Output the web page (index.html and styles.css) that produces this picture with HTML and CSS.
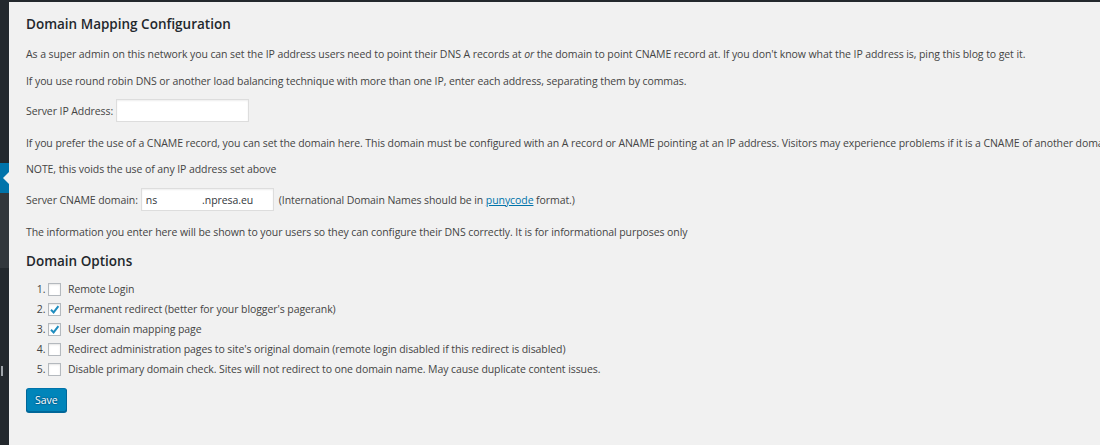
FILE: index.html
```html
<!DOCTYPE html>
<html lang="en">
<head>
    <meta charset="UTF-8">
    <title>Domain Mapping Configuration</title>
    <link rel="stylesheet" href="styles.css">
</head>
<body>
    <div class="admin-bar"></div>
    <div class="layout">
        <div class="sidebar">
            <div class="menu-top"></div>
            <div class="menu-current"><span class="menu-arrow"></span></div>
            <div class="menu-sub"></div>
            <div class="menu-rest"><span class="menu-mark"></span></div>
        </div>

        <div class="wrap">
            <h3 class="section-title">Domain Mapping Configuration</h3>
            <p class="p-first">As a super admin on this network you can set the IP address users need to point their DNS A records at <em>or</em> the domain to point CNAME record at. If you don't know what the IP address is, ping this blog to get it.</p>
            <p class="p-tight">If you use round robin DNS or another load balancing technique with more than one IP, enter each address, separating them by commas.</p>

            <div class="field-row row-ip">
                <label for="ipaddress">Server IP Address:</label>
                <input type="text" id="ipaddress" class="field-ip" value="">
            </div>

            <p class="p-cname">If you prefer the use of a CNAME record, you can set the domain here. This domain must be configured with an A record or ANAME pointing at an IP address. Visitors may experience problems if it is a CNAME of another domain.</p>
            <p class="p-note">NOTE, this voids the use of any IP address set above</p>

            <div class="field-row row-cname">
                <label for="cname">Server CNAME domain:</label>
                <input type="text" id="cname" class="field-cname" value="ns                 .npresa.eu">
                <span class="field-hint">(International Domain Names should be in <a href="#">punycode</a> format.)</span>
            </div>

            <p class="p-info">The information you enter here will be shown to your users so they can configure their DNS correctly. It is for informational purposes only</p>

            <h3 class="section-title options-title">Domain Options</h3>
            <ol class="options">
                <li><span class="check"></span>Remote Login</li>
                <li><span class="check checked"><svg viewBox="0 0 13 13"><path d="M3 6.8l2.6 2.6L10.4 3.2"/></svg></span>Permanent redirect (better for your blogger's pagerank)</li>
                <li><span class="check checked"><svg viewBox="0 0 13 13"><path d="M3 6.8l2.6 2.6L10.4 3.2"/></svg></span>User domain mapping page</li>
                <li><span class="check"></span>Redirect administration pages to site's original domain (remote login disabled if this redirect is disabled)</li>
                <li><span class="check"></span>Disable primary domain check. Sites will not redirect to one domain name. May cause duplicate content issues.</li>
            </ol>

            <button class="button-primary">Save</button>
        </div>
    </div>
</body>
</html>
```

FILE: styles.css
```css
* {
    box-sizing: border-box;
}

html, body {
    margin: 0;
    padding: 0;
}

body {
    background: #f1f1f1;
    color: #444;
    font-family: 'Open Sans', sans-serif;
    font-size: 10.5px;
    letter-spacing: -0.08px;
    overflow: hidden;
    height: 445px;
}

.admin-bar {
    height: 2px;
    background: #23282d;
}

.layout {
    display: flex;
    height: 443px;
}

/* left admin menu, only a sliver is visible */
.sidebar {
    width: 9px;
    flex-shrink: 0;
    background: #23282d;
    display: flex;
    flex-direction: column;
}

.menu-top {
    height: 161px;
}

.menu-current {
    height: 30px;
    background: #0073aa;
    position: relative;
}

.menu-arrow {
    position: absolute;
    right: 0;
    top: 9px;
    width: 0;
    height: 0;
    border-top: 6px solid transparent;
    border-bottom: 6px solid transparent;
    border-right: 6px solid #f1f1f1;
}

.menu-sub {
    height: 75px;
    background: #32373c;
}

.menu-rest {
    flex: 1;
    padding-top: 98px;
}

.menu-mark {
    display: block;
    width: 2px;
    height: 10px;
    margin-left: 1px;
    background: #a0a5aa;
}

.wrap {
    padding-left: 17px;
    flex: 1;
    min-width: 0;
}

.section-title {
    color: #23282d;
    font-size: 13.5px;
    font-weight: 600;
    letter-spacing: 0;
    line-height: 24px;
    margin: 10px 0 0;
}

p {
    margin: 0;
    line-height: 20px;
    white-space: nowrap;
}

.p-first { margin-top: 8px; }
.p-tight { margin-top: 7px; }
.p-cname { margin-top: 11px; }
.p-note { margin-top: 6px; }
.p-info { margin-top: 11px; }

.field-row {
    display: flex;
    align-items: center;
    height: 23px;
}

.row-ip { margin-top: 8px; }
.row-cname { margin-top: 9px; }

.field-row label {
    margin-right: 3px;
}

.field-row input {
    height: 23px;
    width: 133px;
    border: 1px solid #ddd;
    box-shadow: inset 0 1px 2px rgba(0, 0, 0, 0.07);
    background: #fff;
    color: #32373c;
    font-family: inherit;
    font-size: 10.5px;
    letter-spacing: -0.08px;
    padding: 0 4px;
}

.field-hint {
    margin-left: 5px;
}

.field-hint a {
    color: #0073aa;
}

.options-title {
    margin-top: 7px;
}

.options {
    margin: 6px 0 0;
    padding-left: 22px;
}

.options li {
    height: 20px;
    line-height: 20px;
}

.check {
    display: inline-block;
    vertical-align: middle;
    width: 13px;
    height: 13px;
    margin: -2px 7px 0 0;
    background: #fff;
    border: 1px solid #b4b9be;
    box-shadow: inset 0 1px 2px rgba(0, 0, 0, 0.1);
    position: relative;
}

.check svg {
    position: absolute;
    left: -1px;
    top: -1px;
    width: 13px;
    height: 13px;
    fill: none;
    stroke: #1e8cbe;
    stroke-width: 2;
}

.button-primary {
    display: block;
    margin-top: 9px;
    height: 24px;
    padding: 0 8px;
    background: #0085ba;
    border: 1px solid #0073aa;
    border-color: #0073aa #006799 #006799;
    border-radius: 3px;
    box-shadow: 0 1px 0 #006799;
    color: #fff;
    font-family: inherit;
    font-size: 10.5px;
    text-shadow: 0 -1px 1px #006799, 1px 0 1px #006799, 0 1px 1px #006799, -1px 0 1px #006799;
}
```
